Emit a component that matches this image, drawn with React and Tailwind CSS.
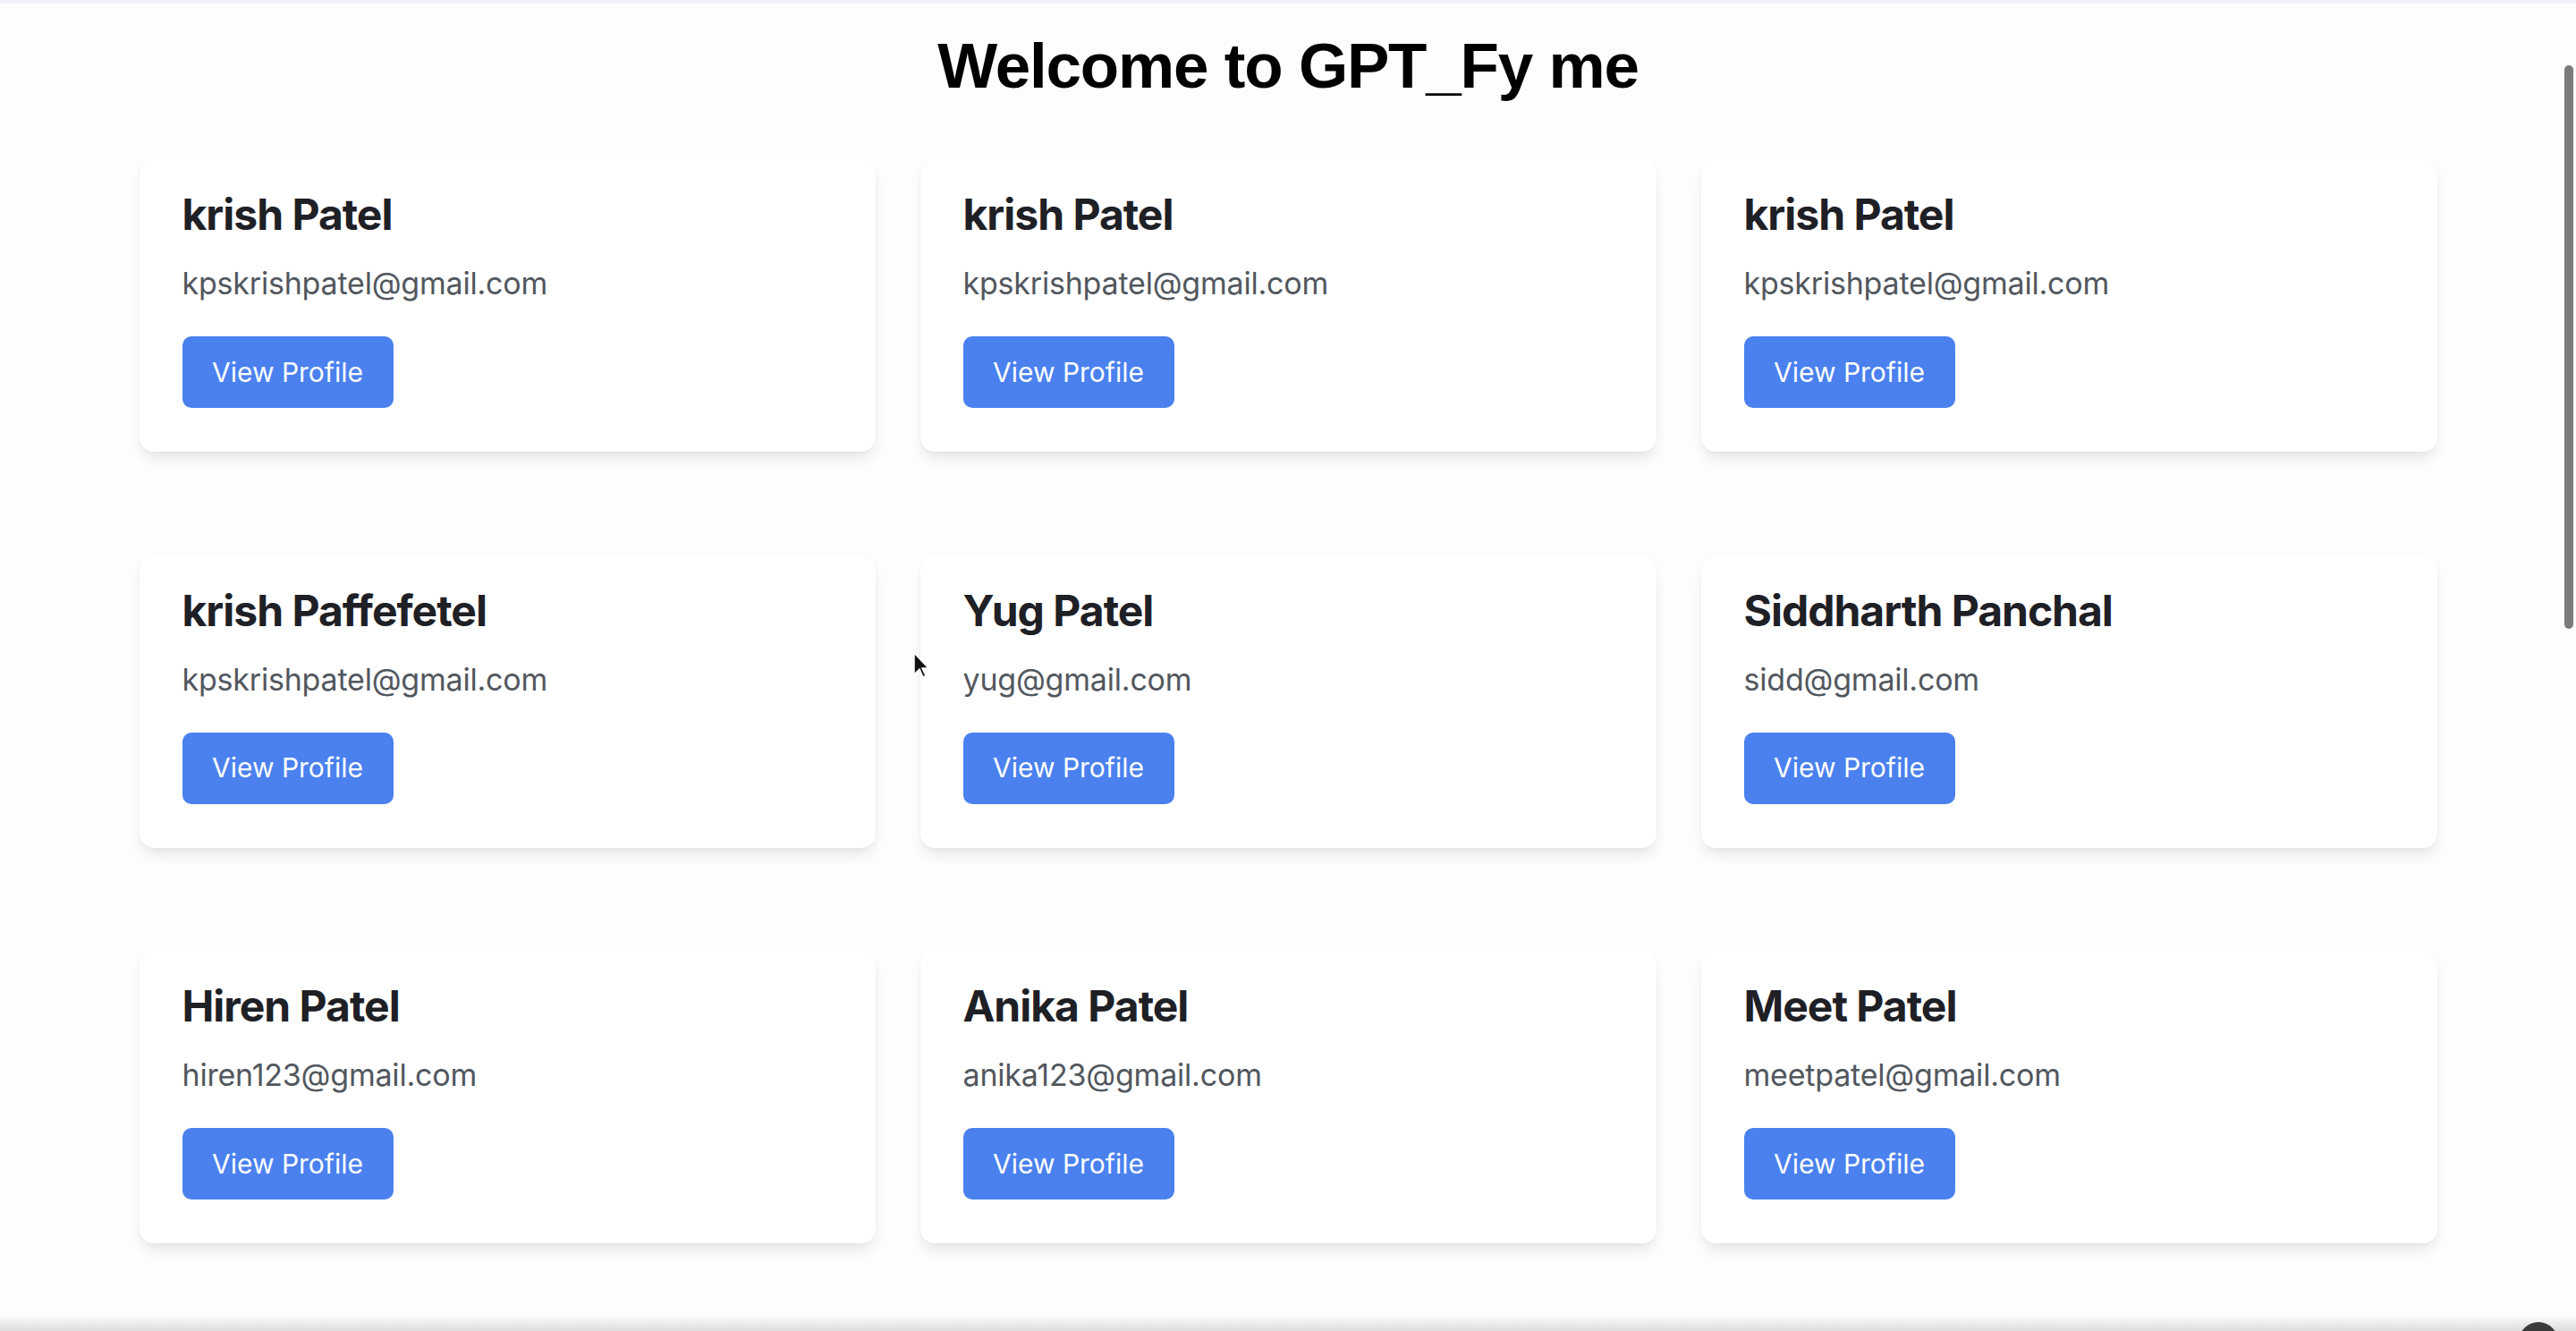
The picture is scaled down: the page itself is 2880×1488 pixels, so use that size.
const users = [
  { id: 1, name: 'krish Patel', email: 'kpskrishpatel@gmail.com' },
  { id: 2, name: 'krish Patel', email: 'kpskrishpatel@gmail.com' },
  { id: 3, name: 'krish Patel', email: 'kpskrishpatel@gmail.com' },
  { id: 4, name: 'krish Paffefetel', email: 'kpskrishpatel@gmail.com' },
  { id: 5, name: 'Yug Patel', email: 'yug@gmail.com' },
  { id: 6, name: 'Siddharth Panchal', email: 'sidd@gmail.com' },
  { id: 7, name: 'Hiren Patel', email: 'hiren123@gmail.com' },
  { id: 8, name: 'Anika Patel', email: 'anika123@gmail.com' },
  { id: 9, name: 'Meet Patel', email: 'meetpatel@gmail.com' },
];

function UserCard({ user }) {
  return (
    <div className="bg-white rounded-[16px] h-[327px] px-[48px] pt-[30px] pb-[48px] shadow-[0_10px_16px_-3px_rgba(0,0,0,0.09),0_3px_8px_-4px_rgba(0,0,0,0.06),0_0_2px_rgba(0,0,0,0.03)]">
      <h2 className="text-[48px] leading-[64px] font-bold text-[#1e2026] tracking-[-1px]">{user.name}</h2>
      <p className="mt-[21px] text-[34px] leading-[48px] text-[#52575e] tracking-[-0.2px]">{user.email}</p>
      <button className="mt-[35px] w-[236px] h-[80px] flex items-center justify-center rounded-[10px] bg-[#4a81ee] text-white text-[30px] font-normal">
        View Profile
      </button>
    </div>
  );
}

export default function App() {
  return (
    <div className="relative h-screen overflow-hidden bg-[#fdfdfd] font-['Inter','Noto_Sans',sans-serif]">
      <div className="h-[4px] bg-[#f4f1fb]" />
      <h1 className="pt-[34px] text-center text-[71px] leading-[71px] font-bold text-black tracking-[-1.2px] font-['Liberation_Sans','Arial',sans-serif]">
        Welcome to GPT_Fy me
      </h1>

      <div className="mt-[69px] w-[2569px] mx-auto grid grid-cols-3 gap-x-[50px] gap-y-[115.5px]">
        {users.map((user) => (
          <UserCard key={user.id} user={user} />
        ))}
      </div>

      {/* scrollbar thumb */}
      <div className="absolute right-[3px] top-[73px] w-[10px] h-[630px] rounded-full bg-[#7b7b7b]" />

      {/* bottom browser edge */}
      <div className="absolute left-0 right-0 bottom-0 h-[16px] bg-gradient-to-b from-[#fafafa] to-[#dcdcdc]" />
      <div className="absolute left-[2816px] top-[1478px] w-[44px] h-[44px] rounded-full bg-[#3b3b3b]" />

      {/* mouse cursor */}
      <svg className="absolute left-[1020px] top-[728px]" width="20" height="32" viewBox="0 0 20 32">
        <path d="M2 2 L2 26 L8 20 L12 29 L15 27.5 L11 19 L18 19 Z" fill="#111" stroke="#fff" strokeWidth="1.5" />
      </svg>
    </div>
  );
}
